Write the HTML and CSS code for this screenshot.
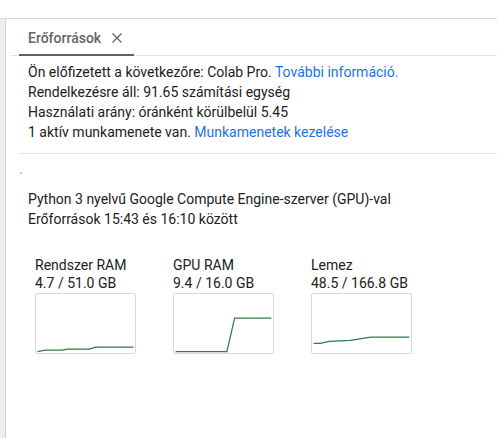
FILE: index.html
```html
<!DOCTYPE html>
<html lang="hu">
<head>
<meta charset="utf-8">
<link rel="stylesheet" href="styles.css">
</head>
<body>
<div class="topbar"></div>
<div class="main">
  <div class="rail"></div>
  <div class="panel">
    <div class="tabbar">
      <div class="tab">
        <span class="tab-title">Erőforrások</span>
        <svg class="tab-close" width="10" height="10" viewBox="0 0 10 10"><path d="M0.5 0.5 L9.5 9.5 M9.5 0.5 L0.5 9.5" stroke="#5f6368" stroke-width="1.2" fill="none"/></svg>
      </div>
    </div>
    <div class="info">
      <p>Ön előfizetett a következőre: Colab Pro. <a class="link">További információ.</a></p>
      <p>Rendelkezésre áll: 91.65 számítási egység</p>
      <p>Használati arány: óránként körülbelül 5.45</p>
      <p>1 aktív munkamenete van. <a class="link">Munkamenetek kezelése</a></p>
    </div>
    <div class="runtime">
      <div class="dot"></div>
      <p>Python 3 nyelvű Google Compute Engine-szerver (GPU)-val</p>
      <p>Erőforrások 15:43 és 16:10 között</p>
      <div class="charts">
        <div class="chart">
          <div class="label">Rendszer RAM</div>
          <div class="label">4.7 / 51.0 GB</div>
          <svg class="graph" width="101" height="61" viewBox="0 0 101 61">
            <polyline points="1,59.5 9,58 26,58 32,57 54,57 61,55 100,55" fill="none" stroke="#2e7d46" stroke-width="1.3"/>
          </svg>
        </div>
        <div class="chart">
          <div class="label">GPU RAM</div>
          <div class="label">9.4 / 16.0 GB</div>
          <svg class="graph" width="101" height="61" viewBox="0 0 101 61">
            <polyline points="1,59.5 54,59.5 62,25 100,25" fill="none" stroke="#2e7d46" stroke-width="1.3"/>
          </svg>
        </div>
        <div class="chart">
          <div class="label">Lemez</div>
          <div class="label">48.5 / 166.8 GB</div>
          <svg class="graph" width="101" height="61" viewBox="0 0 101 61">
            <polyline points="1,51 8,51 17,49 39,48 60,44.5 100,44.5" fill="none" stroke="#2e7d46" stroke-width="1.3"/>
          </svg>
        </div>
      </div>
    </div>
  </div>
</div>
</body>
</html>
```

FILE: styles.css
```css
html, body {
  margin: 0;
  padding: 0;
  background: #ffffff;
}
body {
  font-family: Roboto, "Liberation Sans", sans-serif;
  color: #212121;
  width: 497px;
  height: 438px;
  overflow: hidden;
}
p {
  margin: 0;
}
.topbar {
  height: 18px;
  border-bottom: 1px solid #dadada;
}
.main {
  display: flex;
  height: 419px;
}
.rail {
  width: 5px;
  background: #eeeeee;
  border-right: 1px solid #d4d4d4;
  flex: none;
}
.panel {
  flex: 1;
  min-width: 0;
}
.tabbar {
  margin-left: 5px;
  padding-left: 8px;
  height: 36px;
  border-bottom: 1px solid #e0e0e0;
  display: flex;
  align-items: stretch;
}
.tab {
  width: 115px;
  box-sizing: border-box;
  padding-left: 9px;
  padding-top: 2px;
  border-bottom: 2px solid #616161;
  margin-bottom: -1px;
  display: flex;
  align-items: center;
  gap: 11px;
}
.tab-title {
  font-size: 14px;
  font-weight: 500;
  color: #646464;
}
.tab-close {
  display: block;
}
.info {
  margin-left: 13px;
  padding: 6px 0 11px 9px;
  border-bottom: 1px solid #e0e0e0;
  font-size: 14px;
  line-height: 20px;
}
.link {
  color: #1a73e8;
  text-decoration: none;
}
.runtime {
  margin-left: 13px;
  padding-left: 9px;
  font-size: 14px;
  line-height: 20px;
}
.dot {
  width: 2px;
  height: 2px;
  background: #c8c8c8;
  margin: 18px 0 15px -8px;
}
.charts {
  display: flex;
  gap: 37px;
  margin-top: 27px;
  padding-left: 7px;
}
.chart {
  width: 101px;
}
.label {
  font-size: 14px;
  line-height: 18px;
  white-space: nowrap;
}
.graph {
  display: block;
  margin-top: 1px;
  border: 1px solid #d9d9d9;
  border-radius: 2px;
  box-sizing: border-box;
}
```
